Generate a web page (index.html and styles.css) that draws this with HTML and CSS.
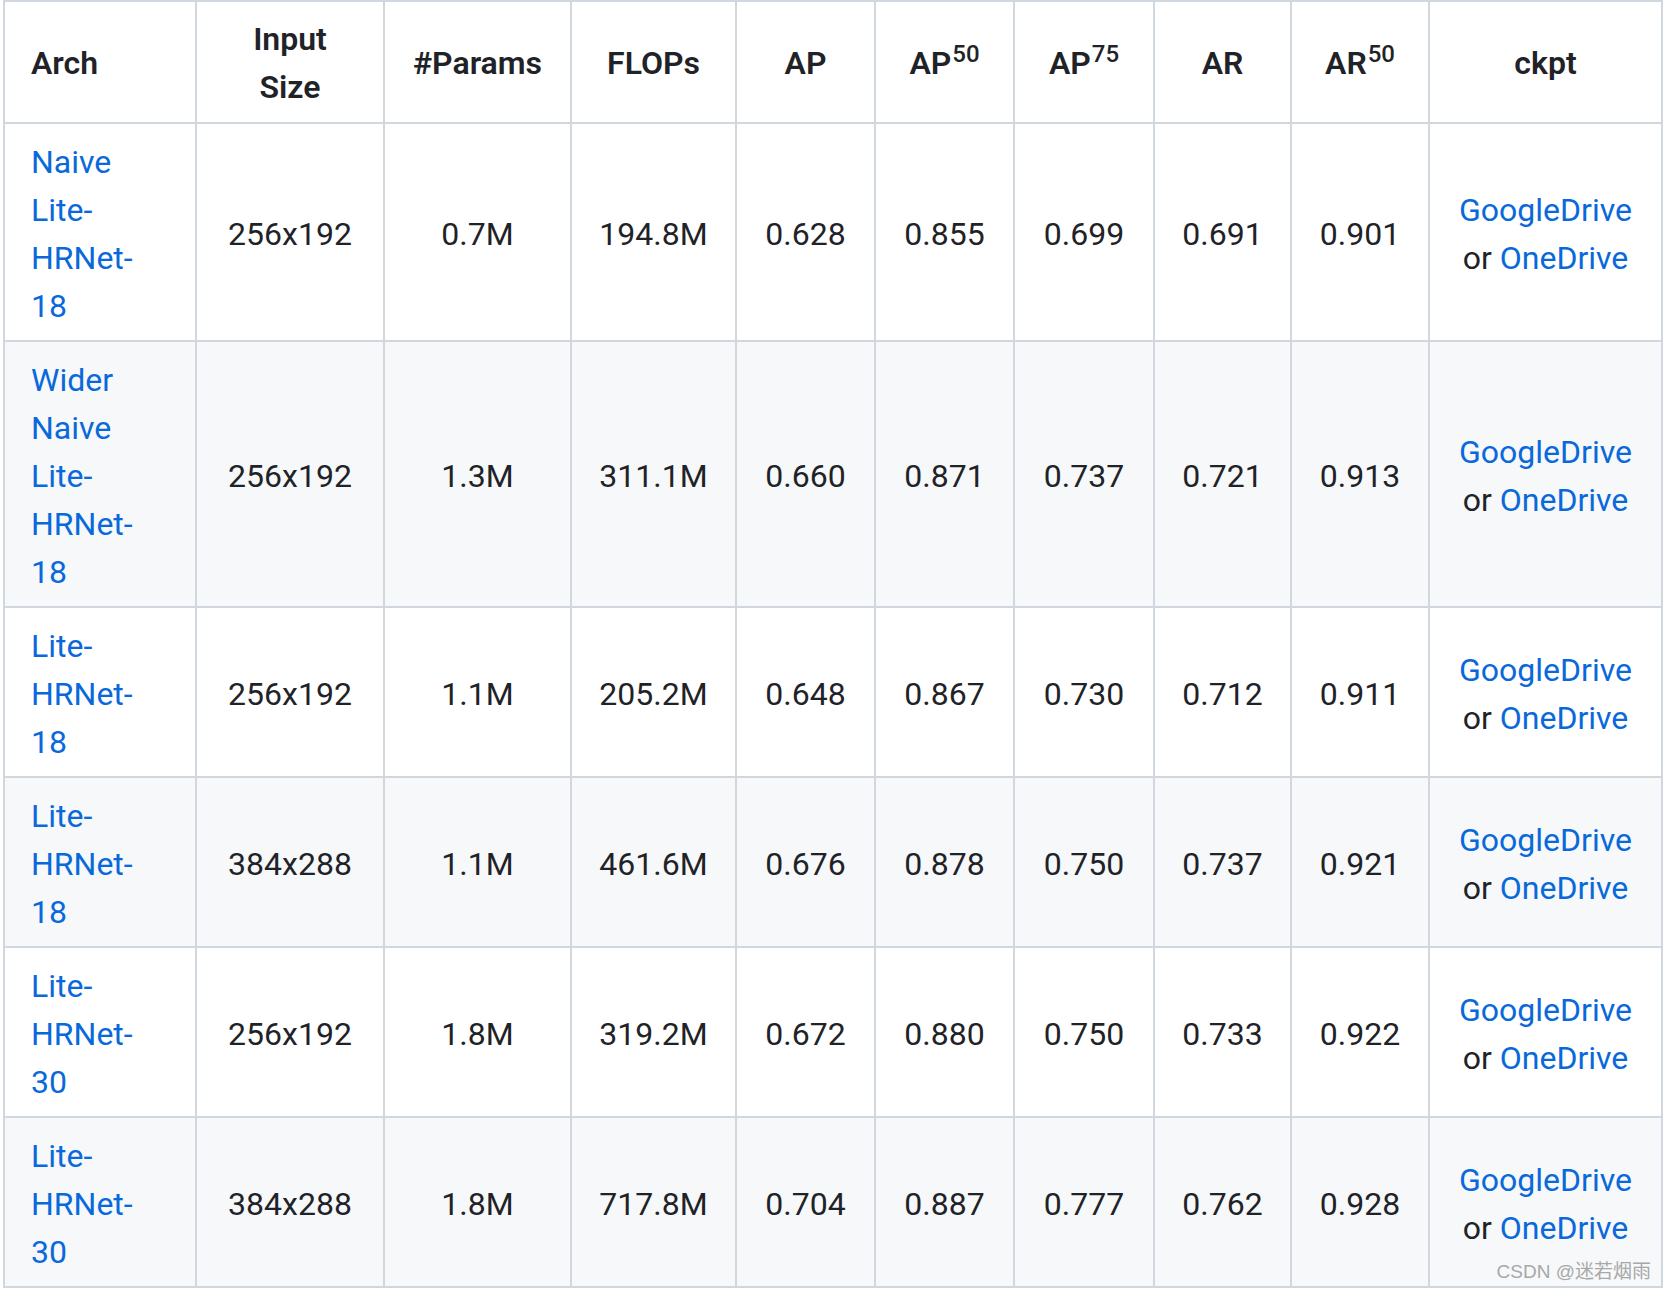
FILE: index.html
```html
<!DOCTYPE html>
<html lang="en">
<head>
<meta charset="utf-8">
<title>Lite-HRNet results</title>
<link rel="stylesheet" href="styles.css">
</head>
<body>
<div class="wrap">
<table class="results">
  <colgroup>
    <col class="c-arch"><col class="c-size"><col class="c-params"><col class="c-flops">
    <col class="c-ap"><col class="c-ap"><col class="c-ap75"><col class="c-ar"><col class="c-ar50"><col class="c-ckpt">
  </colgroup>
  <thead>
    <tr>
      <th class="left">Arch</th>
      <th>Input Size</th>
      <th>#Params</th>
      <th>FLOPs</th>
      <th>AP</th>
      <th>AP<sup>50</sup></th>
      <th>AP<sup>75</sup></th>
      <th>AR</th>
      <th>AR<sup>50</sup></th>
      <th>ckpt</th>
    </tr>
  </thead>
  <tbody>
    <tr>
      <td class="left"><a href="#">Naive Lite-HRNet-18</a></td>
      <td>256x192</td><td>0.7M</td><td>194.8M</td><td>0.628</td><td>0.855</td><td>0.699</td><td>0.691</td><td>0.901</td>
      <td><a href="#">GoogleDrive</a> or <a href="#">OneDrive</a></td>
    </tr>
    <tr>
      <td class="left"><a href="#">Wider Naive Lite-HRNet-18</a></td>
      <td>256x192</td><td>1.3M</td><td>311.1M</td><td>0.660</td><td>0.871</td><td>0.737</td><td>0.721</td><td>0.913</td>
      <td><a href="#">GoogleDrive</a> or <a href="#">OneDrive</a></td>
    </tr>
    <tr>
      <td class="left"><a href="#">Lite-HRNet-18</a></td>
      <td>256x192</td><td>1.1M</td><td>205.2M</td><td>0.648</td><td>0.867</td><td>0.730</td><td>0.712</td><td>0.911</td>
      <td><a href="#">GoogleDrive</a> or <a href="#">OneDrive</a></td>
    </tr>
    <tr>
      <td class="left"><a href="#">Lite-HRNet-18</a></td>
      <td>384x288</td><td>1.1M</td><td>461.6M</td><td>0.676</td><td>0.878</td><td>0.750</td><td>0.737</td><td>0.921</td>
      <td><a href="#">GoogleDrive</a> or <a href="#">OneDrive</a></td>
    </tr>
    <tr>
      <td class="left"><a href="#">Lite-HRNet-30</a></td>
      <td>256x192</td><td>1.8M</td><td>319.2M</td><td>0.672</td><td>0.880</td><td>0.750</td><td>0.733</td><td>0.922</td>
      <td><a href="#">GoogleDrive</a> or <a href="#">OneDrive</a></td>
    </tr>
    <tr>
      <td class="left"><a href="#">Lite-HRNet-30</a></td>
      <td>384x288</td><td>1.8M</td><td>717.8M</td><td>0.704</td><td>0.887</td><td>0.777</td><td>0.762</td><td>0.928</td>
      <td><a href="#">GoogleDrive</a> or <a href="#">OneDrive</a></td>
    </tr>
  </tbody>
</table>
<div class="watermark">CSDN @迷若烟雨</div>
</div>
</body>
</html>
```
FILE: styles.css
```css
html, body {
  margin: 0;
  padding: 0;
  background: #ffffff;
}
body {
  font-family: Roboto, "Liberation Sans", sans-serif;
  color: #1f2328;
}
.wrap {
  position: relative;
  width: 1662px;
  padding-left: 3px;
}
.results {
  border-collapse: collapse;
  table-layout: fixed;
  width: 1660px;
  font-size: 32px;
  line-height: 48px;
}
.c-arch { width: 192px; }
.c-size { width: 188px; }
.c-params { width: 187px; }
.c-flops { width: 165px; }
.c-ap { width: 139px; }
.c-ap75 { width: 140px; }
.c-ar { width: 137px; }
.c-ar50 { width: 138px; }
.c-ckpt { width: 233px; }

.results th,
.results td {
  border: 2px solid #d0d7de;
  padding: 14px 26px 10px;
  text-align: center;
  vertical-align: middle;
}
.results th {
  font-weight: 600;
  padding-top: 13px;
  padding-bottom: 11px;
}
.results .left {
  text-align: left;
  padding-right: 31px;
}
.results tbody tr:nth-child(2n) {
  background: #f6f8fa;
}
.results a {
  color: #0969da;
  text-decoration: none;
}
.results sup {
  font-size: 24px;
  font-weight: 500;
  line-height: 0;
  position: relative;
  vertical-align: baseline;
  top: -12px;
  margin-left: 1px;
}
.watermark {
  position: absolute;
  right: 14px;
  bottom: 5px;
  font-family: "Liberation Sans", "Noto Sans CJK SC", sans-serif;
  font-size: 19px;
  color: #a8a8a8;
}
```
